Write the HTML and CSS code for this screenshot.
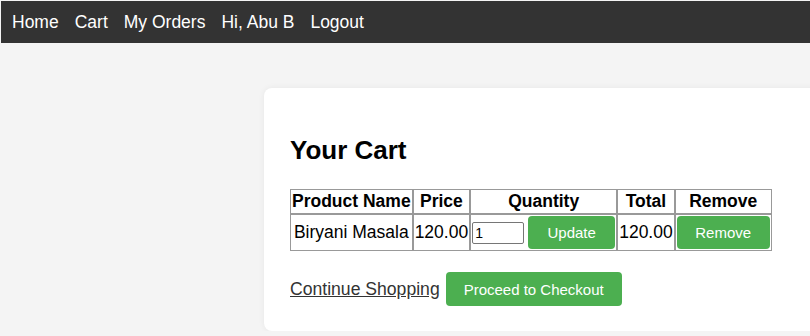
FILE: index.html
```html
<!DOCTYPE html>
<html lang="en">
<head>
  <meta charset="UTF-8" />
  <meta name="viewport" content="width=device-width, initial-scale=1.0"/>
  <title>Your Cart</title>
  <link rel="stylesheet" href="styles.css">
</head>
<body>
  <nav class="topnav">
    <a href="#">Home</a>
    <a href="#">Cart</a>
    <a href="#">My Orders</a>
    <span>Hi, Abu B</span>
    <a href="#">Logout</a>
  </nav>

  <div class="container">
    <h2>Your Cart</h2>
    <table class="cart-table">
      <tr>
        <th>Product Name</th>
        <th>Price</th>
        <th>Quantity</th>
        <th>Total</th>
        <th>Remove</th>
      </tr>
      <tr>
        <td>Biryani Masala</td>
        <td>120.00</td>
        <td>
          <form class="qty-form">
            <input type="number" value="1" min="1" class="qty">
            <button type="button" class="btn btn-update">Update</button>
          </form>
        </td>
        <td>120.00</td>
        <td><button type="button" class="btn btn-remove">Remove</button></td>
      </tr>
    </table>

    <div class="actions">
      <a href="#" class="continue">Continue Shopping</a>
      <button type="button" class="btn btn-checkout">Proceed to Checkout</button>
    </div>
  </div>
</body>
</html>
```

FILE: styles.css
```css
* {
  box-sizing: border-box;
}

body {
  margin: 0;
  padding: 1px 0 0 1px;
  background-color: #f4f4f4;
  font-family: "Liberation Sans", Arial, sans-serif;
  overflow: hidden;
}

.topnav {
  display: flex;
  align-items: center;
  gap: 16px;
  height: 42px;
  padding: 0 11px;
  background-color: #333;
}

.topnav a,
.topnav span {
  color: #fff;
  font-size: 17.5px;
  text-decoration: none;
}

.container {
  width: 600px;
  margin: 45px 0 0 263px;
  padding: 24px 26px 25px;
  background: #fff;
  border-radius: 8px;
  box-shadow: 0 0 6px rgba(0, 0, 0, 0.06);
}

.container h2 {
  margin: 23px 0 23px;
  font-size: 26px;
}

.cart-table {
  border: 1px solid #999;
  border-spacing: 0;
  font-size: 17.5px;
}

.cart-table th,
.cart-table td {
  border: 1px solid #999;
  padding: 1px;
  text-align: center;
  white-space: nowrap;
}

.cart-table th {
  border-top: none;
}

.cart-table td {
  border-bottom: none;
}

.cart-table th:first-child,
.cart-table td:first-child {
  border-left: none;
}

.cart-table th:last-child,
.cart-table td:last-child {
  border-right: none;
}

.qty-form {
  display: flex;
  align-items: center;
  gap: 4px;
}

.qty {
  width: 52px;
  height: 22px;
  padding: 1px 2px;
  border: 1px solid #767676;
  border-radius: 2px;
  font-family: "Liberation Sans", Arial, sans-serif;
  font-size: 14px;
}

.btn {
  height: 33px;
  padding: 0;
  border: none;
  border-radius: 4px;
  background-color: #4caf50;
  color: #fff;
  font-family: "Liberation Sans", Arial, sans-serif;
  font-size: 15px;
  cursor: pointer;
}

.btn-update {
  width: 87px;
}

.btn-remove {
  width: 93px;
}

.actions {
  display: flex;
  align-items: center;
  gap: 6px;
  margin-top: 21px;
}

.continue {
  color: #333;
  font-size: 17.6px;
}

.btn-checkout {
  width: 176px;
  height: 34px;
}
```
